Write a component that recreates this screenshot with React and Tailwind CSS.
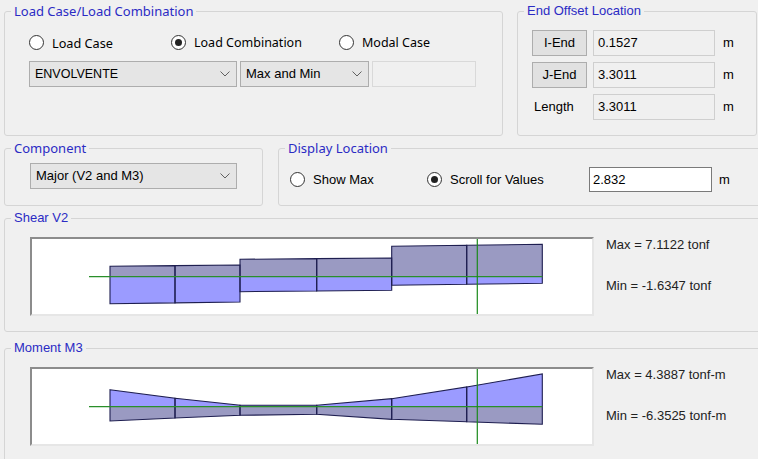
const SEGOE = "font-['Noto_Sans',sans-serif]";

const shearQuads = [
  [110, 175, 266.3, 265.65, 303.7, 302.85],
  [175, 240, 265.65, 265, 302.85, 302],
  [240, 316.7, 259.3, 258.65, 291.7, 291],
  [316.7, 391.7, 258.65, 258, 291, 290.3],
  [391.7, 466.7, 246.3, 245.3, 285.3, 284.3],
  [466.7, 542.3, 245.3, 244.3, 284.3, 283.3],
];

const momentQuads = [
  [110, 175, 389.7, 398.3, 421, 418],
  [175, 240, 398.3, 405.3, 418, 415.3],
  [240, 316.7, 405.3, 405.3, 415.3, 414.3],
  [316.7, 391.7, 405.3, 398.7, 414.3, 419.3],
  [391.7, 466.7, 398.7, 387, 419.3, 421.7],
  [466.7, 542.3, 387, 374, 421.7, 424.3],
];

const GRAY = "#9a9ac2";
const BRIGHT = "#9b9bff";

const GroupBox = ({ title, titleFont = "", className = "", children }) => (
  <fieldset
    className={`shrink-0 rounded-[3px] border border-[#d5d5d5] ${className}`}
  >
    <legend
      className={`ml-[6px] px-[3px] text-[13px] leading-[16px] text-[#2b2bc4] ${titleFont}`}
    >
      {title}
    </legend>
    {children}
  </fieldset>
);

const Radio = ({ checked, label, labelFont = "", className = "" }) => (
  <div className={`flex items-center gap-[8px] ${className}`}>
    <div className="flex h-[15px] w-[15px] items-center justify-center rounded-full border border-[#333] bg-white">
      {checked && <div className="h-[7px] w-[7px] rounded-full bg-[#222]" />}
    </div>
    <span className={`leading-[16px] ${labelFont}`}>{label}</span>
  </div>
);

const Chevron = () => (
  <svg width="10" height="6" viewBox="0 0 10 6" className="shrink-0">
    <polyline
      points="0.5,0.5 5,5 9.5,0.5"
      fill="none"
      stroke="#606060"
      strokeWidth="1"
    />
  </svg>
);

const Select = ({ value, className = "" }) => (
  <div
    className={`flex h-[26px] items-center justify-between border border-[#adadad] bg-[#e5e5e5] pl-[5px] pr-[6px] ${className}`}
  >
    <span className="leading-[16px]">{value}</span>
    <Chevron />
  </div>
);

const ReadBox = ({ value }) => (
  <div className="flex h-[26px] w-[122px] items-center border border-[#cfcfcf] bg-[#f0f0f0] pl-[4px]">
    {value}
  </div>
);

const Diagram = ({ quads, axis, top, upper, lower }) => (
  <svg width="560" height="75" viewBox={`32 ${top} 560 75`} className="block">
    {quads.map(([x0, x1, t0, t1, b0, b1], i) => (
      <g key={i}>
        <polygon
          points={`${x0},${t0} ${x1},${t1} ${x1},${axis} ${x0},${axis}`}
          fill={upper}
        />
        <polygon
          points={`${x0},${axis} ${x1},${axis} ${x1},${b1} ${x0},${b0}`}
          fill={lower}
        />
      </g>
    ))}
    {quads.map(([x0, x1, t0, t1, b0, b1], i) => (
      <polygon
        key={i}
        points={`${x0},${t0} ${x1},${t1} ${x1},${b1} ${x0},${b0}`}
        fill="none"
        stroke="#1e1e50"
        strokeWidth="1.1"
      />
    ))}
    <line x1="89" y1={axis} x2="542.3" y2={axis} stroke="#2a8f2a" strokeWidth="1.3" />
    <line x1="477.3" y1={top} x2="477.3" y2={top + 75} stroke="#1a8a1a" strokeWidth="1.2" />
  </svg>
);

const ChartRow = ({ quads, axis, top, upper, lower, max, min }) => (
  <div className="ml-[25px] mt-[11px] flex">
    <div className="h-[79px] w-[564px] shrink-0 border-2 border-b-[#e6e6e6] border-l-[#8c8c8c] border-r-[#e6e6e6] border-t-[#8c8c8c] bg-white">
      <Diagram quads={quads} axis={axis} top={top} upper={upper} lower={lower} />
    </div>
    <div className="ml-[12px] flex flex-col text-[#222]">
      <span className="leading-[16px]">{max}</span>
      <span className="mt-[25px] leading-[16px]">{min}</span>
    </div>
  </div>
);

export default function App() {
  return (
    <div className="h-[459px] w-[758px] overflow-hidden bg-[#f0f0f0] font-['Liberation_Sans',Arial,sans-serif] text-[13px] text-black">
      <div className="flex flex-col pl-[4px] pt-[3px]">
        <div className="flex gap-[14px]">
          <GroupBox
            title="Load Case/Load Combination"
            titleFont={`${SEGOE} text-[12.7px]`}
            className="h-[133px] w-[499px]"
          >
            <div className="pl-[24px] pt-[16px]">
              <div className="flex h-[15px] items-center">
                <Radio label="Load Case" labelFont={`${SEGOE} text-[12.7px]`} className="w-[142px]" />
                <Radio checked label="Load Combination" labelFont={`${SEGOE} text-[12.5px]`} className="w-[168px]" />
                <Radio label="Modal Case" labelFont={`${SEGOE} text-[12.5px]`} />
              </div>
              <div className="mt-[11px] flex">
                <Select value="ENVOLVENTE" className="w-[208px] text-[12.5px]" />
                <Select value="Max and Min" className="ml-[3px] w-[129px]" />
                <div className="ml-[3px] h-[26px] w-[104px] border border-[#d9d9d9] bg-[#f0f0f0]" />
              </div>
            </div>
          </GroupBox>

          <GroupBox title="End Offset Location" className="h-[133px] w-[240px]">
            <div className="flex flex-col gap-[6px] pl-[14px] pt-[11px]">
              {[
                ["I-End", "0.1527", true],
                ["J-End", "3.3011", true],
                ["Length", "3.3011", false],
              ].map(([label, value, isButton]) => (
                <div key={label} className="flex items-center">
                  {isButton ? (
                    <div className="flex h-[26px] w-[55px] items-center justify-center border border-[#adadad] bg-[#e1e1e1]">
                      {label}
                    </div>
                  ) : (
                    <div className="w-[55px] pl-[2px]">{label}</div>
                  )}
                  <div className="ml-[6px]">
                    <ReadBox value={value} />
                  </div>
                  <span className="ml-[8px]">m</span>
                </div>
              ))}
            </div>
          </GroupBox>
        </div>

        <div className="mt-[4px] flex gap-[15px]">
          <GroupBox
            title="Component"
            titleFont={`${SEGOE} text-[12.7px]`}
            className="h-[66px] w-[259px]"
          >
            <div className="pl-[25px] pt-[7px]">
              <Select value="Major (V2 and M3)" className="w-[207px]" />
            </div>
          </GroupBox>

          <GroupBox
            title="Display Location"
            titleFont={`${SEGOE} text-[12.7px]`}
            className="h-[66px] w-[490px]"
          >
            <div className="flex h-[25px] items-center pl-[11px] pt-0 mt-[11px]">
              <Radio label="Show Max" className="w-[137px]" />
              <Radio checked label="Scroll for Values" className="w-[162px]" />
              <div className="flex h-[25px] w-[123px] items-center border border-[#7a7a7a] bg-white pl-[3px]">
                2.832
              </div>
              <span className="ml-[7px]">m</span>
            </div>
          </GroupBox>
        </div>

        <GroupBox title="Shear V2" className="mt-[4px] h-[122px] w-[770px]">
          <ChartRow
            quads={shearQuads}
            axis={276.7}
            top={239}
            upper={GRAY}
            lower={BRIGHT}
            max="Max = 7.1122 tonf"
            min="Min = -1.6347 tonf"
          />
        </GroupBox>

        <GroupBox title="Moment M3" className="mt-[8px] h-[140px] w-[770px]">
          <ChartRow
            quads={momentQuads}
            axis={406.7}
            top={369}
            upper={BRIGHT}
            lower={GRAY}
            max="Max = 4.3887 tonf-m"
            min="Min = -6.3525 tonf-m"
          />
        </GroupBox>
      </div>
    </div>
  );
}
